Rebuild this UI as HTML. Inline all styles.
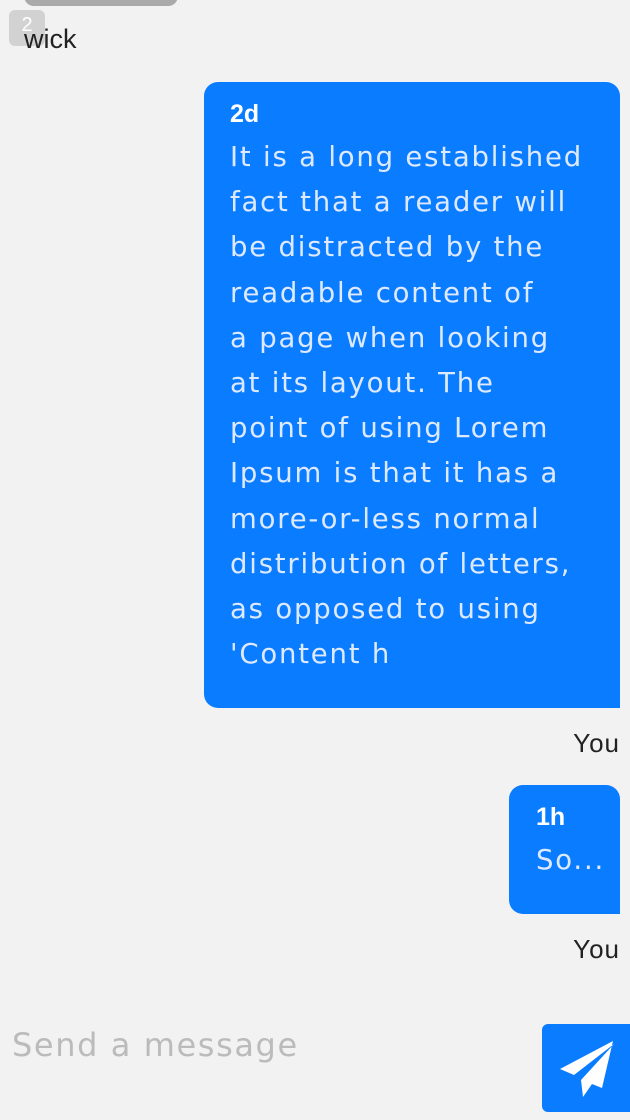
<!DOCTYPE html>
<html><head><meta charset="utf-8"><style>
body{margin:0;width:630px;height:1120px;background:#f2f2f2;position:relative;overflow:hidden;font-family:"Liberation Sans",sans-serif}
.b{position:absolute;background:#0a7cff;border-radius:14px;color:#dde9ff}
.t{position:absolute;font-family:"DejaVu Sans",sans-serif;font-size:27.5px;letter-spacing:1.8px;line-height:45.2px;white-space:nowrap}
.h{position:absolute;font-weight:bold;font-size:25px;color:#fff}
.you{position:absolute;right:10px;font-size:26px;letter-spacing:1px;color:#222}
</style></head><body>
<div style="position:absolute;left:24px;top:-20px;width:154px;height:26px;background:#aaa;border-radius:10px"></div>
<div style="position:absolute;left:9px;top:10px;width:36px;height:36px;background:#d2d2d2;border-radius:6px;color:#fff;font-size:20px;text-align:center;line-height:30px">2</div>
<div style="position:absolute;left:24px;top:24px;font-size:27px;color:#222">wick</div>
<div class="b" style="left:204px;top:82px;width:416px;height:626px;border-radius:14px 14px 0 14px">
<div class="h" style="left:26px;top:18px">2d</div>
<div class="t" style="left:26px;top:53px">It is a long established<br>fact that a reader will<br>be distracted by the<br>readable content of<br>a page when looking<br>at its layout. The<br>point of using Lorem<br>Ipsum is that it has a<br>more-or-less normal<br>distribution of letters,<br>as opposed to using<br>'Content h</div>
</div>
<div class="you" style="top:728px">You</div>
<div class="b" style="left:509px;top:785px;width:111px;height:129px;border-radius:14px 14px 0 14px">
<div class="h" style="left:27px;top:18px">1h</div>
<div class="t" style="left:27px;top:53px">So...</div>
</div>
<div class="you" style="top:934px">You</div>
<div style="position:absolute;left:12px;top:1026px;font-family:'DejaVu Sans',sans-serif;font-size:32px;letter-spacing:1.6px;color:#bbb">Send a message</div>
<div style="position:absolute;left:542px;top:1024px;width:100px;height:88px;background:#0a7cff;border-radius:6px">
<svg width="88" height="88" viewBox="0 0 88 88" style="position:absolute;left:0;top:0"><path d="M71 17 L18 45 L32 51 L72 20 L39 56 L41 73 L50 60 L60 64 Z" fill="#fff"/></svg>
</div>
</body></html>
